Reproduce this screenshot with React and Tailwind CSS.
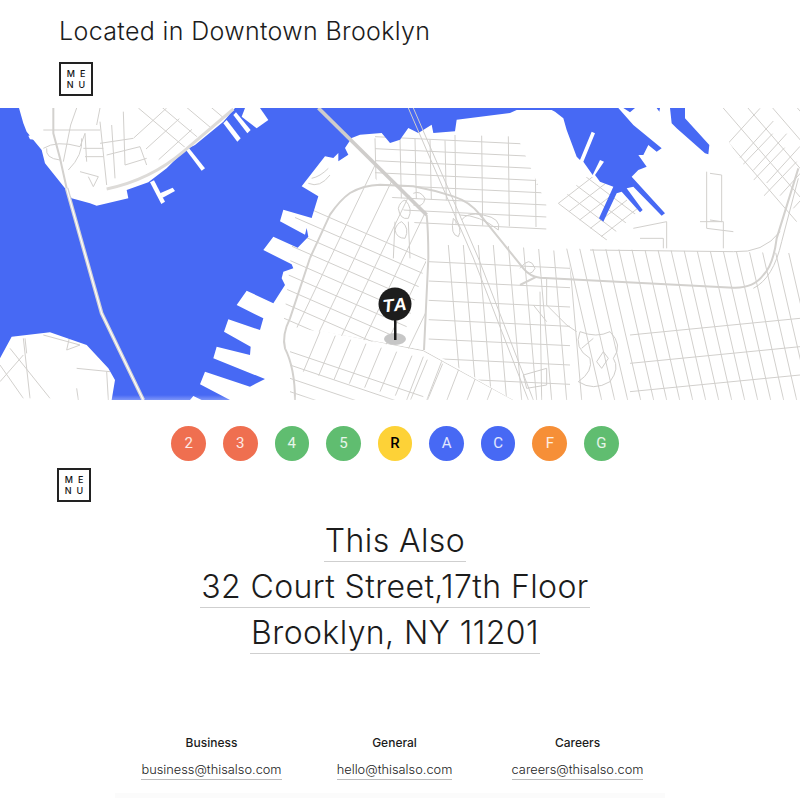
import React from "react";

// every map coordinate is in 3x page units (x * 3, (y - 105) * 3)
const fam = ([x1, y1, x2, y2], [dx, dy], n) =>
  Array.from({ length: n }, (_, i) => `M${x1 + dx * i} ${y1 + dy * i}L${x2 + dx * i} ${y2 + dy * i}`).join("");

const areas = [
  {
    // downtown, rotated grid
    clip: "M850 660L1250 735L1275 735L1280 320L1040 90L900 200Z",
    d:
      fam([1130, 170, 880, 690], [60, 27], 8) +
      fam([880, 290, 1280, 465], [-12, 40], 12),
  },
  {
    // south of the long boundary street
    clip: "M860 660L1270 735L1540 885L860 885Z",
    d:
      fam([960, 680, 910, 800], [46, 12], 9) +
      fam([870, 740, 1270, 875], [0, 40], 4) +
      fam([1270, 755, 1220, 885], [55, 14], 5) +
      "M860 655L1270 737L1540 885",
  },
  {
    // grid above the expressway
    clip: "M1060 90L1550 90L1640 300L1640 420L1285 400L1125 220Z",
    d:
      fam([1125, 100, 1130, 300], [75, 3], 1) +
      fam([1200, 100, 1204, 280], [45, 2], 4) +
      fam([1365, 90, 1368, 360], [80, 2], 4) +
      fam([1125, 95, 1640, 120], [0, 36], 8) +
      "M1620 90L1640 210L1610 240",
  },
  {
    // between the expressway legs and the long avenues
    clip: "M1285 400L1700 440L1790 885L1540 885L1285 735Z",
    d:
      fam([1345, 420, 1385, 885], [45, 0], 9) +
      fam([1285, 470, 1710, 490], [0, 58], 8),
  },
  {
    // long streets to the east
    clip: "M1690 430L2400 445L2400 885L1790 885Z",
    d:
      fam([1700, 430, 1805, 885], [39, 0], 18) +
      fam([1890, 690, 2400, 640], [0, 85], 3),
  },
  {
    // basin blocks
    clip: "M1670 220L1790 215L1930 305L1810 415L1740 410L1670 300Z",
    d:
      fam([1675, 295, 1840, 420], [27, -27], 5) +
      fam([1675, 295, 1785, 210], [32, 25], 5),
  },
  {
    // top right diagonals
    clip: "M2120 9L2400 9L2400 360L2330 330Z",
    d:
      fam([2105, 20, 2390, 350], [50, -28], 5) +
      fam([2180, 120, 2280, 10], [40, 38], 6) +
      fam([2275, 290, 2390, 170], [-36, -42], 3),
  },
  {
    // manhattan, grid by the fdr
    clip: "M400 9L705 9L590 95L520 155L430 215L400 120Z",
    d:
      fam([415, 9, 600, 165], [38, -30], 8) +
      fam([400, 100, 500, 9], [38, 32], 8),
  },
];

const streets = [
  // pieces of street that do not form a grid
  "M2100 350L2170 350L2170 430M2120 200L2120 370L2200 380M2130 205L2165 210L2165 350L2130 345",
  "M1900 370L2000 350L2000 430M1920 400L1990 400L1990 430",
  "M300 50L320 240M370 20L375 180M335 60L345 220M255 85L260 170M250 130L310 130M255 155L310 155M130 75L300 75M300 9L290 60",
  "M320 150L420 125L440 180M375 180L440 160M400 100L300 115",
  "M130 130Q170 105 240 125L255 85M140 130Q135 160 180 165M245 100Q250 150 205 195M240 200L295 215L280 245L265 215",
  "M230 9L212 60L200 120L190 170",
  "M0 780L70 880M30 730L150 880M70 700L90 880M70 750L0 830M75 700L80 745M130 690L240 720L200 735L210 690M230 790L330 800M320 800L325 885M230 850L235 885",
  "M935 220Q960 215 985 190M925 235Q960 250 990 210",
  "M1640 520L1640 600L1700 660L1730 680M1600 600L1640 650",
  "M1620 560L1625 885",
].join("");

const water =
  "M0 9L57 9L70 55L80 80L125 135L135 175L195 250L215 280L270 295L290 302L385 280L380 255L445 232L500 190L555 135L585 120L670 50L705 9" +
  "L1855 9L1900 60L1985 130L1970 140L1945 120L1930 150L1915 150L1940 185L1915 195L1895 215L1995 325L1985 332L1900 245L1880 250L1928 315L1920 322L1865 260L1850 265L1810 350L1797 340L1840 245L1800 230L1785 210L1812 170L1800 165L1778 210L1750 170L1785 85L1775 80L1740 165L1730 155L1700 75L1690 40L1665 20L1655 15" +
  "L1550 15L1530 24L1370 44L1365 79L1300 84L1295 59L1255 84L1225 69L1200 104L1170 114L1145 84L1080 89L1055 99L1035 129L1045 149L1015 169L1015 144L1000 159L975 154L940 199L905 244L955 274" +
  "L935 339L850 314L840 349L915 389L920 369L925 395L893 428L820 395L790 435L875 478L880 490L850 500L845 520L855 540L820 595L740 557L710 600L790 640L780 675L685 643L672 680L752 725L750 750L650 725L640 760L795 822L750 845L615 800L600 838L690 885" +
  "L605 885L580 873L570 885L335 885L345 825L325 790L260 720L150 682L35 695L0 760Z";

const water2 = "M2010 9L2055 9L2055 40L2128 120L2125 148L2115 145L2030 70L2015 55Z M1870 9L1905 9L1890 22Z M1970 9L1980 9L1978 20Z";

const piers = [
  "M725 35L770 70L805 45L780 9L735 9Z",
  "M700 30L708 22L752 75L742 85Z",
  "M670 55L680 45L722 100L712 110Z",
  "M558 135L566 128L615 190L605 197Z",
  "M450 232L462 226L495 290L484 297Z",
  "M480 265L518 248L525 258L488 278Z",
  "M85 92L135 82L135 92L120 106L90 103Z",
];

const highways = [
  "M930 459L990 329Q1020 285 1050 264Q1090 240 1140 239L1240 244Q1300 255 1360 274Q1410 290 1440 329L1570 490Q1590 515 1620 518L2200 548Q2260 550 2290 510Q2320 480 2330 400L2395 190",
  "M930 459L870 640Q845 690 855 730Q885 790 885 885",
  "M1280 330Q1285 380 1285 460L1272 735",
  "M160 9L160 85L180 160L200 250",
  "M1560 540Q1590 525 1610 515",
];

const thin = [
  "M1225 9L1420 459L1585 885",
  "M1240 9L1435 459L1600 885",
  "M1770 435L2200 440Q2290 445 2340 380",
  "M1560 490Q1590 450 1605 490Q1590 520 1570 490",
  "M2260 550Q2320 520 2345 410L2395 220",
  // the ramp loops
  "M1215 285Q1240 310 1225 340Q1200 345 1195 310Q1200 290 1215 285",
  "M1205 350Q1230 370 1215 400Q1190 400 1185 375Q1190 355 1205 350",
  "M1185 350L1180 460M1225 350L1230 460",
  "M1380 330Q1440 330 1495 375Q1505 340 1450 330Q1400 320 1385 345",
  "M1360 340Q1350 390 1375 395Q1390 370 1360 340",
  "M1240 300Q1270 310 1275 280Q1260 255 1240 265",
  // park
  "M1740 680Q1790 700 1830 680Q1870 720 1840 760Q1860 790 1830 830Q1780 860 1735 830Q1780 800 1770 760Q1720 730 1740 680",
  "M1790 770L1810 740L1825 760L1805 790ZM1745 730L1780 700",
  "M1570 810L1640 790L1640 840L1580 850Z",
];

function Menu({ className }) {
  return (
    <div className={`w-[34px] h-[34px] border-2 border-[#222] flex flex-col items-center justify-center text-[9px] leading-[11px] font-medium tracking-[5px] pl-[5px] text-[#111] ${className}`}>
      <span>ME</span>
      <span>NU</span>
    </div>
  );
}

function MapPanel() {
  return (
    <div className="relative h-[292px] w-full overflow-hidden">
      <svg viewBox="0 9 2400 876" className="block w-full h-full" fill="none">
        <defs>
          {areas.map((a, i) => (
            <clipPath key={i} id={`area-${i}`}>
              <path d={a.clip} />
            </clipPath>
          ))}
        </defs>
        <rect x="0" y="0" width="2400" height="900" fill="#fff" />
        {areas.map((a, i) => (
          <path key={i} d={a.d} clipPath={`url(#area-${i})`} stroke="#d2d0cd" strokeWidth="3" />
        ))}
        <path d={streets} stroke="#d2d0cd" strokeWidth="3" />
        <path d={water} fill="#4769f4" />
        <path d={water2} fill="#4769f4" />
        {piers.map((d, i) => (
          <path key={i} d={d} fill="#fff" />
        ))}
        <path d="M320 252Q450 225 550 140L700 12" stroke="#dddbd8" strokeWidth="9" />
        {highways.map((d, i) => (
          <path key={i} d={d} stroke="#d3d1ce" strokeWidth="6" />
        ))}
        <path d="M955 9L1280 330" stroke="#cfcdcb" strokeWidth="11" />
        <path d="M200 250L305 625L430 885" stroke="#d3d3d6" strokeWidth="11" />
        <path d="M200 250L305 625L430 885" stroke="#fff" strokeWidth="3.5" />
        {thin.map((d, i) => (
          <path key={i} d={d} stroke="#d0cecb" strokeWidth="3" />
        ))}
      </svg>
      <svg viewBox="0 0 40 64" className="absolute left-[375px] top-[178px] w-[40px] h-[64px]">
        <ellipse cx="20" cy="53" rx="11" ry="6" fill="#c6c6c6" />
        <rect x="19" y="30" width="2.5" height="24" fill="#1a1a1a" />
        <circle cx="20" cy="18" r="16.5" fill="#1d1d1d" />
        <text x="20" y="25" textAnchor="middle" transform="rotate(-7 20 18)" fontFamily="'Liberation Sans', sans-serif" fontStyle="italic" fontWeight="700" fontSize="18" letterSpacing="1" fill="#fff">
          TA
        </text>
      </svg>
      <div className="absolute left-0 right-0 bottom-0 h-[5px] bg-gradient-to-b from-white/0 to-white/30" />
    </div>
  );
}

const lines = [
  { name: "2", bg: "bg-[#ef6f50]" },
  { name: "3", bg: "bg-[#ef6f50]" },
  { name: "4", bg: "bg-[#60bd70]" },
  { name: "5", bg: "bg-[#60bd70]" },
  { name: "R", bg: "bg-[#fdd237]", dark: true },
  { name: "A", bg: "bg-[#4769f4]" },
  { name: "C", bg: "bg-[#4769f4]" },
  { name: "F", bg: "bg-[#f68f37]" },
  { name: "G", bg: "bg-[#60bd70]" },
];

const contacts = [
  { label: "Business", email: "business@thisalso.com" },
  { label: "General", email: "hello@thisalso.com" },
  { label: "Careers", email: "careers@thisalso.com" },
];

const address = ["This Also", "32 Court Street,17th Floor", "Brooklyn, NY 11201"];

export default function App() {
  return (
    <div className="w-[800px] h-[798px] overflow-hidden bg-white text-[#1c1c1c] font-['Inter','Liberation_Sans',sans-serif]">
      <div className="h-[108px] pl-[59px] pt-[14px]">
        <h1 className="text-[25px] leading-[34px] font-[350] tracking-[0.35px]">Located in Downtown Brooklyn</h1>
        <Menu className="mt-[14px]" />
      </div>
      <MapPanel />
      <div className="flex justify-center gap-[17px] pt-[26px] pr-[10px]">
        {lines.map((l) => (
          <div
            key={l.name}
            className={`w-[34.6px] h-[34.6px] rounded-full flex items-center justify-center text-[15px] font-['Roboto',sans-serif] ${l.bg} ${l.dark ? "text-black font-medium" : "text-white/85"}`}
          >
            {l.name}
          </div>
        ))}
      </div>
      <Menu className="ml-[57px] mt-[7px]" />
      <div className="mt-[14px] flex flex-col items-center pr-[10px]">
        {address.map((a) => (
          <span key={a} className="block text-[32px] leading-[42px] h-[46px] pt-[4px] font-[350] tracking-[0.4px] border-b border-[#cfcfcf] px-[1px]">
            {a}
          </span>
        ))}
      </div>
      <div className="flex pl-[120px] pt-[79px]">
        {contacts.map((c) => (
          <div key={c.label} className="w-[183px] flex flex-col items-center">
            <span className="text-[12px] leading-[20px] font-medium">{c.label}</span>
            <span className="mt-[8px] text-[12.8px] leading-[18px] font-[350] border-b border-[#bdbdbd]">{c.email}</span>
          </div>
        ))}
      </div>
      <div className="mt-[13px] ml-[115px] w-[550px] h-[6px] bg-[#fbfbfb]" />
    </div>
  );
}
